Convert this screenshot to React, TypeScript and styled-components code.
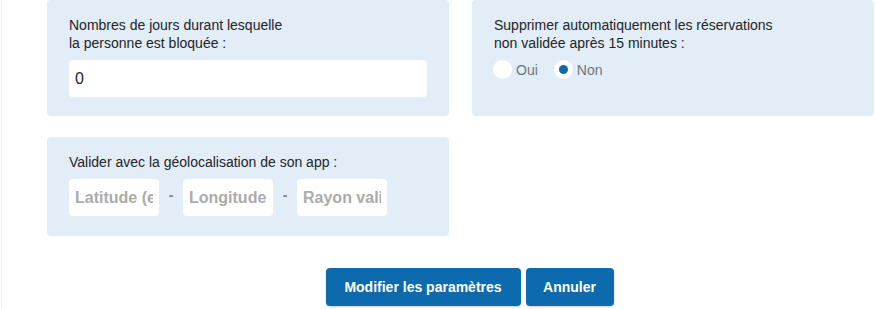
import React from "react";
import styled, { createGlobalStyle } from "styled-components";

const Global = createGlobalStyle`
  html, body { margin: 0; padding: 0; background: #fff; }
  body { font-family: "Liberation Sans", Arial, sans-serif; color: #212529; }
  * { box-sizing: border-box; }
`;

const Page = styled.div`
  margin-left: 1px;
  border-left: 1px solid #f0f1f3;
  min-height: 309px;
  padding: 0 0 0 45px;
`;

const Grid = styled.div`
  display: grid;
  grid-template-columns: 402px 402px;
  column-gap: 23px;
  row-gap: 21px;
`;

const Card = styled.div<{ $h: number }>`
  background: #e3edf7;
  border-radius: 4px;
  height: ${(p) => p.$h}px;
  padding: 16px 22px 0 22px;
`;

const Label = styled.div`
  font-size: 14px;
  line-height: 18px;
  color: #212529;
  margin-bottom: 8px;
`;

const TextInput = styled.input<{ $w?: number }>`
  display: block;
  width: ${(p) => (p.$w ? `${p.$w}px` : "100%")};
  height: 37px;
  border: none;
  border-radius: 4px;
  background: #fff;
  padding: 0 6px;
  font-family: "Liberation Sans", Arial, sans-serif;
  font-size: 16px;
  color: #212529;
  outline: none;
  &::placeholder {
    color: #ababab;
    font-weight: 700;
  }
`;

const RadioRow = styled.div`
  display: flex;
  align-items: center;
  gap: 16px;
  margin-top: 1px;
  margin-left: -1px;
`;

const RadioItem = styled.label`
  display: flex;
  align-items: center;
  gap: 4px;
  font-size: 14px;
  color: #6c757d;
`;

const RadioDot = styled.span<{ $on?: boolean }>`
  width: 19px;
  height: 19px;
  border-radius: 50%;
  background: #fff;
  display: inline-flex;
  align-items: center;
  justify-content: center;
  &::after {
    content: "";
    width: 9px;
    height: 9px;
    border-radius: 50%;
    background: ${(p) => (p.$on ? "#0d6aad" : "transparent")};
  }
`;

const GeoRow = styled.div`
  display: flex;
  align-items: center;
`;

const Dash = styled.span`
  width: 24px;
  text-align: center;
  color: #7d838a;
  font-weight: 700;
  font-size: 14px;
  margin-top: -6px;
`;

const Actions = styled.div`
  display: flex;
  justify-content: center;
  gap: 5px;
  margin-top: 32px;
  padding-left: 16px;
`;

const Button = styled.button<{ $w: number }>`
  width: ${(p) => p.$w}px;
  height: 38px;
  border: none;
  border-radius: 4px;
  background: #0d6aad;
  color: #fff;
  font-family: "Liberation Sans", Arial, sans-serif;
  font-weight: 700;
  font-size: 14px;
  box-shadow: 0 1px 2px rgba(0, 0, 0, 0.2);
  cursor: pointer;
`;

export default function App() {
  return (
    <>
      <Global />
      <Page>
        <Grid>
          <Card $h={116}>
            <Label>
              Nombres de jours durant lesquelle
              <br />
              la personne est bloquée :
            </Label>
            <TextInput defaultValue="0" />
          </Card>
          <Card $h={116}>
            <Label>
              Supprimer automatiquement les réservations
              <br />
              non validée après 15 minutes :
            </Label>
            <RadioRow>
              <RadioItem>
                <RadioDot />
                Oui
              </RadioItem>
              <RadioItem>
                <RadioDot $on />
                Non
              </RadioItem>
            </RadioRow>
          </Card>
          <Card $h={99}>
            <Label>Valider avec la géolocalisation de son app :</Label>
            <GeoRow>
              <TextInput $w={90} placeholder="Latitude (ex: 48.85)" />
              <Dash>-</Dash>
              <TextInput $w={90} placeholder="Longitude (ex: 2.35)" />
              <Dash>-</Dash>
              <TextInput $w={90} placeholder="Rayon valide (m)" />
            </GeoRow>
          </Card>
        </Grid>
        <Actions>
          <Button $w={195}>Modifier les paramètres</Button>
          <Button $w={88}>Annuler</Button>
        </Actions>
      </Page>
    </>
  );
}
